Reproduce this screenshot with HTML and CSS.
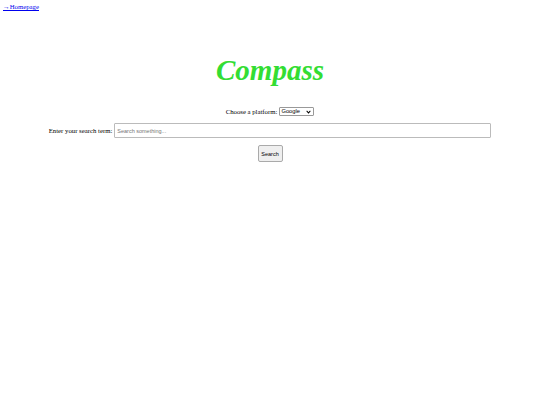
FILE: index.html
```html
<!DOCTYPE html>
<html>
<head>
<meta charset="utf-8">
<link rel="stylesheet" href="styles.css">
</head>
<body>
<a class="home" href="#">&rarr;Homepage</a>
<h1 class="title">Compass</h1>
<form class="form">
  <div class="row">
    <label for="platform">Choose a platform:</label>
    <select id="platform" class="select"><option>Google</option></select>
  </div>
  <div class="row">
    <label for="q">Enter your search term:</label>
    <input id="q" class="input" type="text" placeholder="Search something...">
  </div>
  <div class="row">
    <button type="button" class="btn">Search</button>
  </div>
</form>
</body>
</html>
```
FILE: styles.css
```css
html, body { margin: 0; padding: 0; background: #fff; }
body {
  padding: 3px;
  font-family: "Liberation Serif", "Times New Roman", serif;
  font-size: 6.75px;
  color: #000;
}
.home { color: #0000ee; text-decoration: underline; display: inline-block; line-height: 8px; }
.title {
  margin: 42px 0 0 0;
  text-align: center;
  font-size: 29px;
  font-style: italic;
  font-weight: bold;
  color: #33dd33;
  line-height: 34px;
}
.form { margin-top: 20px; display: flex; flex-direction: column; align-items: center; }
.row { display: flex; align-items: center; justify-content: center; gap: 2px; }
.row + .row { margin-top: 7px; }
.row:last-child { margin-top: 7px; }
.select {
  -webkit-appearance: none;
  appearance: none;
  font-family: "Liberation Sans", Arial, sans-serif;
  font-size: 5.8px;
  height: 9px;
  line-height: 7px;
  padding: 0 0 0 1px;
  border: 1px solid #999;
  border-radius: 1px;
  background: #fff url("data:image/svg+xml,%3Csvg xmlns='http://www.w3.org/2000/svg' width='6' height='4' viewBox='0 0 6 4'%3E%3Cpath d='M0.8 0.8 L3 3 L5.2 0.8' fill='none' stroke='%23000' stroke-width='1.1'/%3E%3C/svg%3E") no-repeat right 2px center;
  background-size: 5px 3.5px;
  width: 35px;
  color: #000;
}
.input {
  width: 377px;
  height: 15px;
  box-sizing: border-box;
  font-family: "Liberation Sans", Arial, sans-serif;
  font-size: 5.5px;
  padding: 0 2px;
  border: 1px solid #bbb;
  border-radius: 1px;
}
.input::placeholder { color: #757575; }
.btn {
  width: 25px;
  height: 17px;
  font-family: "Liberation Sans", Arial, sans-serif;
  font-size: 5.5px;
  padding: 0;
  border: 1px solid #aaa;
  border-radius: 2px;
  background: #efefef;
  color: #000;
}
```
